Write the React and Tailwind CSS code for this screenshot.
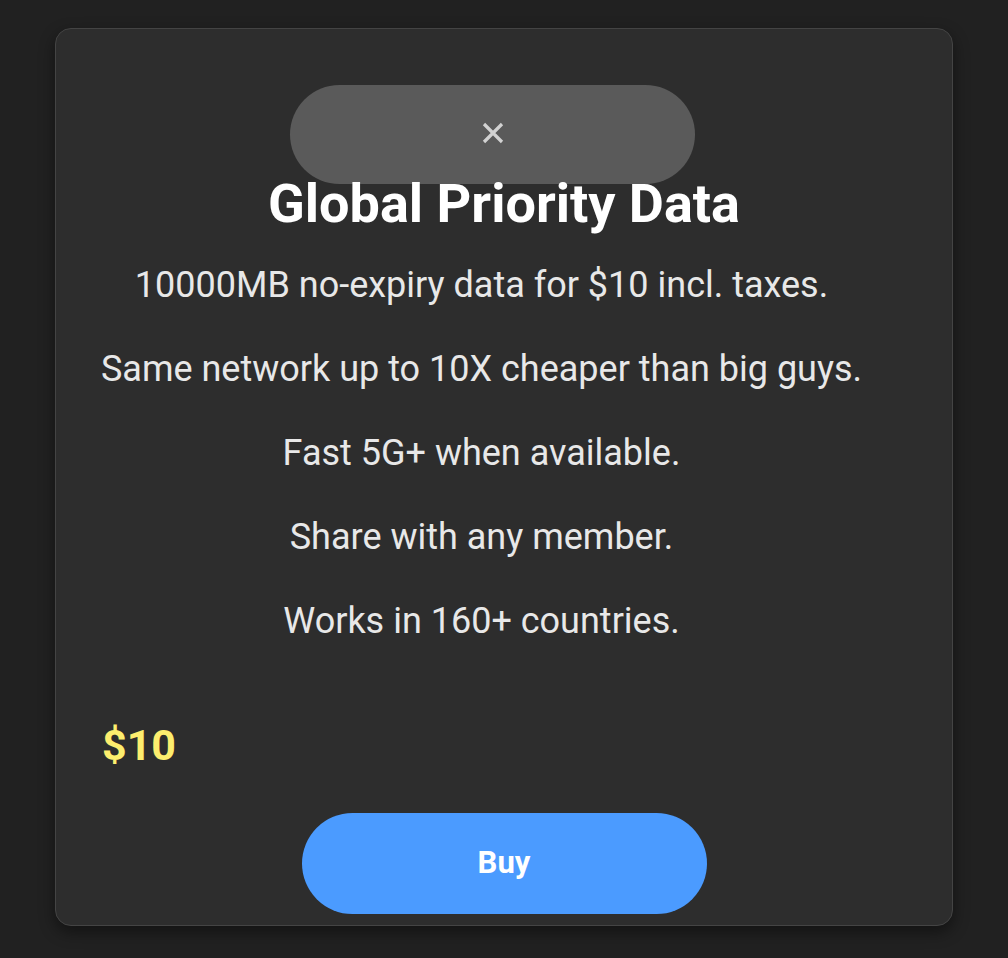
export default function App() {
  const lines = [
    "10000MB no-expiry data for $10 incl. taxes.",
    "Same network up to 10X cheaper than big guys.",
    "Fast 5G+ when available.",
    "Share with any member.",
    "Works in 160+ countries.",
  ];
  return (
    <div
      className="min-h-[958px] w-full bg-[#212121] px-[55px] pt-[28px] pb-[32px]"
      style={{ fontFamily: "Roboto, 'Liberation Sans', sans-serif" }}
    >
      <div className="flex flex-col rounded-[16px] border border-[#444444] bg-[#2d2d2d] pt-[56px] pb-[11px] shadow-[0_6px_16px_rgba(0,0,0,0.45)]">
        <div className="flex justify-center pr-[23px]">
          <button className="flex h-[99px] w-[405px] items-center justify-center rounded-full bg-[#5a5a5a]">
            <svg width="22" height="22" viewBox="0 0 22 22" className="-mt-[3px]">
              <path d="M2 2 L20 20 M20 2 L2 20" stroke="#d2d2d2" strokeWidth="3.2" strokeLinecap="butt" />
            </svg>
          </button>
        </div>
        <h1 className="-mt-[7px] text-center text-[54px] font-bold leading-[54px] text-white">
          Global Priority Data
        </h1>
        <div className="mt-[30px] flex flex-col gap-[36px] pl-[23px] pr-[68px] text-center text-[36px] leading-[48px] text-[#e8e8e8]">
          {lines.map((l) => (
            <p key={l} className="whitespace-nowrap">{l}</p>
          ))}
        </div>
        <div className="mt-[79px] pl-[46px] text-[43px] font-bold leading-[43px] text-[#fdee6e]">
          $10
        </div>
        <div className="mt-[46px] flex justify-center">
          <button className="flex h-[101px] w-[405px] items-center justify-center rounded-full bg-[#4b9bff] text-[31px] font-bold text-white">
            Buy
          </button>
        </div>
      </div>
    </div>
  );
}
